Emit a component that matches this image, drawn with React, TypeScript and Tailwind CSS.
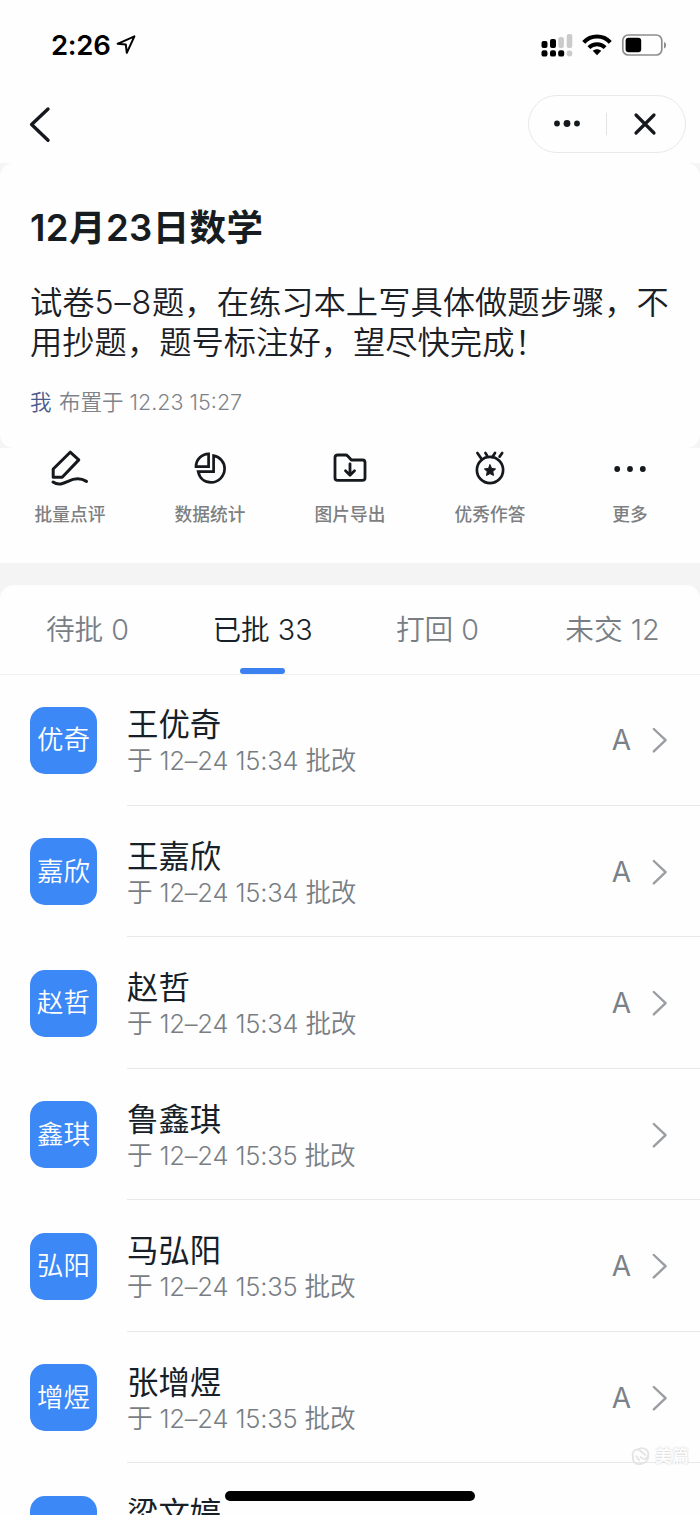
import type { ReactNode } from "react";

// types
interface Student {
  name: string;
  short: string;
  time: string;
  grade?: string;
}

interface Action {
  label: string;
  icon: ReactNode;
}

// data
const students: Student[] = [
  { name: "王优奇", short: "优奇", time: "15:34", grade: "A" },
  { name: "王嘉欣", short: "嘉欣", time: "15:34", grade: "A" },
  { name: "赵哲", short: "赵哲", time: "15:34", grade: "A" },
  { name: "鲁鑫琪", short: "鑫琪", time: "15:35" },
  { name: "马弘阳", short: "弘阳", time: "15:35", grade: "A" },
  { name: "张增煜", short: "增煜", time: "15:35", grade: "A" },
  { name: "梁文婷", short: "文婷", time: "15:35", grade: "A" },
];

const tabs = [
  { label: "待批", count: 0 },
  { label: "已批", count: 33, active: true },
  { label: "打回", count: 0 },
  { label: "未交", count: 12 },
];

const actions: Action[] = [
  {
    label: "批量点评",
    icon: (
      <svg width="40" height="40" viewBox="0 0 40 40" fill="none" stroke="#15181c" strokeWidth="3" strokeLinecap="round" strokeLinejoin="round">
        <path d="M3.2 28.2V20L20.2 3.2L28.8 10.9L12.2 28.2Z" />
        <path d="M3 33C8.5 36.8 13.5 34.5 18 32.4C24 29.3 30 28.4 36.5 32.4" />
      </svg>
    ),
  },
  {
    label: "数据统计",
    icon: (
      <svg width="40" height="40" viewBox="0 0 40 40" fill="none" stroke="#15181c" strokeWidth="2.7" strokeLinejoin="miter">
        <path d="M18.6 4.9V17.6H6C6 10.6 11.4 5.2 18.6 4.9Z" />
        <path d="M23.6 6.6C30.4 8 34.6 13.6 34.6 19.6C34.6 27.2 28.6 33.4 21 33.4C14.6 33.4 9.6 29.2 8.2 22.6H23.6Z" />
      </svg>
    ),
  },
  {
    label: "图片导出",
    icon: (
      <svg width="40" height="40" viewBox="0 0 40 40" fill="none" stroke="#15181c" strokeWidth="2.8" strokeLinecap="round" strokeLinejoin="round">
        <path d="M8 6H15.6Q16.8 6 17.7 7L21.4 11H32.6Q35 11 35 13.4V29Q35 31.4 32.4 31.4H7.6Q5 31.4 5 29V8.6Q5 6 8 6Z" />
        <path d="M20 14.8V26M15.5 21.8L20 26.2L24.5 21.8" />
      </svg>
    ),
  },
  {
    label: "优秀作答",
    icon: (
      <svg width="40" height="40" viewBox="0 0 40 40" fill="none" stroke="#15181c" strokeWidth="2.7" strokeLinecap="round" strokeLinejoin="round">
        <circle cx="20" cy="21" r="13.1" />
        <path d="M7.4 4L11.4 9.8M15.4 4L17 6.4M25 4L22.4 8M32.2 4L29.6 7.6" />
        <path d="M20 15.8L21.7 19.4L25.6 19.9L22.8 22.6L23.5 26.5L20 24.6L16.5 26.5L17.2 22.6L14.4 19.9L18.3 19.4Z" fill="#15181c" strokeWidth="1" />
      </svg>
    ),
  },
  {
    label: "更多",
    icon: (
      <svg width="40" height="40" viewBox="0 0 40 40" fill="#15181c">
        <circle cx="7.2" cy="20" r="2.9" />
        <circle cx="20" cy="20" r="2.9" />
        <circle cx="32.8" cy="20" r="2.9" />
      </svg>
    ),
  },
];

function StatusBar() {
  return (
    <div className="flex h-[88px] shrink-0 items-center justify-between pt-[1px] pr-[33px] pl-[51px]">
      <div className="flex items-center gap-[6px]">
        <span className="pt-[2px] text-[27.5px] leading-none font-semibold tracking-[-0.3px] text-black">2:26</span>
        <svg width="20" height="20" viewBox="0 0 20 20" fill="none" stroke="#000" strokeWidth="2" strokeLinejoin="round">
          <path d="M1.6 8.8L18.4 1.4L10.8 17.8L9.8 9.4Z" />
        </svg>
      </div>

      <div className="flex items-center">
        {/* Signal */}
        <svg width="32" height="24" viewBox="0 0 32 24">
          <rect x="0.5" y="8" width="6" height="7" rx="2" />
          <rect x="9" y="6" width="6" height="9" rx="2" />
          <rect x="17.3" y="4" width="5.6" height="11" rx="2" fill="#cbcbcb" />
          <rect x="25.7" y="1" width="5.6" height="14" rx="2" fill="#cbcbcb" />
          <rect x="0.5" y="17.2" width="6" height="6.4" rx="2.2" />
          <rect x="9" y="17.2" width="6" height="6.4" rx="2.2" />
          <rect x="17.2" y="17.2" width="6" height="6.4" rx="2.2" />
          <rect x="25.7" y="17.5" width="5.6" height="6" rx="2.4" fill="#cbcbcb" />
        </svg>

        {/* Wifi */}
        <svg className="ml-[9px]" width="30" height="24" viewBox="0 0 30 24" fill="none" stroke="#000" strokeWidth="4.1">
          <path d="M1.7 9.3C9 1.6 21 1.6 28.3 9.3" />
          <path d="M6.9 14.6C11.4 10.2 18.6 10.2 23.1 14.6" />
          <path d="M15 22.2L10.7 17.8C13.2 15.7 16.8 15.7 19.3 17.8Z" fill="#000" stroke="none" />
        </svg>

        {/* Battery */}
        <svg className="ml-[9px]" width="46" height="24" viewBox="0 0 46 24">
          <rect x="1.8" y="2" width="39" height="20" rx="5.5" fill="none" stroke="#8d8d8d" strokeWidth="1.7" />
          <rect x="4.6" y="4.8" width="15.6" height="14.4" rx="3" />
          <path d="M43 9C45.8 9.8 45.8 14.8 43 15.6Z" fill="#8d8d8d" />
        </svg>
      </div>
    </div>
  );
}

function NavBar() {
  return (
    <div className="flex h-[75px] shrink-0 items-start justify-between pt-[7px] pr-[14px] pl-7">
      <svg className="mt-[10px]" width="24" height="38" viewBox="0 0 24 38" fill="none" stroke="#15181c" strokeWidth="3.4" strokeLinecap="round" strokeLinejoin="round">
        <path d="M20 4L3.6 19.5L20 35.2" />
      </svg>

      <div className="flex h-[58px] w-[158px] items-center rounded-full border-[1.5px] border-[#e7eaea] pr-[2px]">
        <div className="flex flex-1 justify-center">
          <svg width="28" height="8" viewBox="0 0 28 8" fill="#15181c">
            <circle cx="4" cy="3.5" r="2.9" />
            <circle cx="14" cy="3.5" r="3.4" />
            <circle cx="24" cy="3.5" r="2.9" />
          </svg>
        </div>
        <div className="h-[22px] w-px bg-[#e2e4e5]" />
        <div className="flex flex-1 justify-center">
          <svg width="24" height="24" viewBox="0 0 24 24" stroke="#15181c" strokeWidth="3.2" strokeLinecap="round">
            <path d="M3 3L21 21M21 3L3 21" />
          </svg>
        </div>
      </div>
    </div>
  );
}

function StudentRow({ student }: { student: Student }) {
  return (
    <div className="flex h-[131.5px] shrink-0 pl-[30px]">
      <div className="mt-[32.5px] flex h-[67px] w-[67px] items-center justify-center rounded-[15px] bg-[#3b88f6] pb-px text-[26.5px] leading-none font-[350] text-white">
        {student.short}
      </div>

      <div className="ml-[30px] flex flex-1 justify-between border-b-[1.5px] border-[#e6e8e9]">
        <div className="pt-8">
          <p className="text-[31.4px] leading-[38px] text-[#171f29]">{student.name}</p>
          <p className="text-[25.6px] leading-[34px] font-[350] tracking-[-0.2px] text-[#797e85]">
            于 12–24 {student.time} 批改
          </p>
        </div>

        <div className="flex items-center pt-[2px] pr-[32px]">
          {student.grade && (
            <span className="mr-[20px] text-[28px] leading-none text-[#7b8188]">{student.grade}</span>
          )}
          <svg width="17" height="28" viewBox="0 0 17 28" fill="none" stroke="#9a9da1" strokeWidth="2.4" strokeLinecap="round" strokeLinejoin="round">
            <path d="M2.8 3L14.6 14.2L2.8 25.4" />
          </svg>
        </div>
      </div>
    </div>
  );
}

export default function App() {
  return (
    <div className="relative flex h-[1515px] w-[700px] flex-col overflow-hidden bg-[#fefefe] font-[Inter,'Noto_Sans_CJK_SC',sans-serif]">
      <StatusBar />
      <NavBar />

      {/* Homework */}
      <div className="shrink-0 bg-[#f5f5f5]">
        <section className="h-[285px] rounded-[14px] bg-[#fefefe] pt-[41px] pl-[30px]">
          <h1 className="text-[36.5px] leading-[48px] font-semibold tracking-[0.4px] text-[#171c21]">12月23日数学</h1>
          <p className="mt-[31px] text-[32.3px] leading-[39.5px] font-[350] whitespace-nowrap text-[#1b2026]">
            试卷<span className="tracking-[0.8px]">5–8</span>题，在练习本上写具体做题步骤，不
            <br />
            用抄题，题号标注好，望尽快完成！
          </p>
          <p className="mt-[25px] text-[21.5px] leading-[30px] font-[350] text-[#7e838a]">
            <span className="mr-[1.5px] text-[#4c5b8c]">我</span> 布置于 12.23 15:27
          </p>
        </section>
      </div>

      {/* Actions */}
      <div className="grid h-[115px] shrink-0 grid-cols-5 pt-px">
        {actions.map((action) => (
          <div key={action.label} className="flex flex-col items-center">
            {action.icon}
            <span className="mt-[14px] text-[17.7px] leading-6 font-medium text-[#7d7f81]">{action.label}</span>
          </div>
        ))}
      </div>

      {/* Tabs */}
      <div className="shrink-0 bg-[#f4f4f4] pt-[22px]">
        <div className="grid h-[90px] grid-cols-4 rounded-t-[14px] border-b-[1.5px] border-[#f0f1f2] bg-[#fefefe]">
          {tabs.map((tab) => (
            <div key={tab.label} className="flex flex-col items-center justify-between pt-[25px]">
              <span className={`text-[28.7px] leading-10 font-[350] ${tab.active ? "text-[#171f29]" : "text-[#797e85]"}`}>
                {tab.label} {tab.count}
              </span>
              {tab.active && <span className="h-[6px] w-[45px] rounded-[3px] bg-[#3b82f0]" />}
            </div>
          ))}
        </div>
      </div>

      {/* Students */}
      <div className="-mt-px shrink-0">
        {students.map((student) => (
          <StudentRow key={student.name} student={student} />
        ))}
      </div>

      {/* Watermark */}
      <div className="absolute top-[1444px] right-[11px] flex items-center gap-[5px] text-[#fdfdfd]">
        <svg width="19" height="19" viewBox="0 0 19 19" fill="none" stroke="#e4e4e4" strokeWidth="1.8">
          <path d="M2.5 10.5C-0.5 5 5 0.5 9 3.5L15 8.5" />
          <path d="M7 2.2C12-0.2 18 2 17.2 8C16.6 12 12 13.5 9 9.5" />
          <path d="M2 9C1 15 5 18 9.5 17C14 16.5 17.5 13 17.4 9M5 8.5L8.6 14" />
        </svg>
        <span className="text-[17px] leading-6 font-bold [text-shadow:0_0_2px_#c4c4c4]">美篇</span>
      </div>

      {/* Home indicator */}
      <div className="absolute top-[1491px] left-[225px] h-[10px] w-[250px] rounded-full bg-black" />
    </div>
  );
}
